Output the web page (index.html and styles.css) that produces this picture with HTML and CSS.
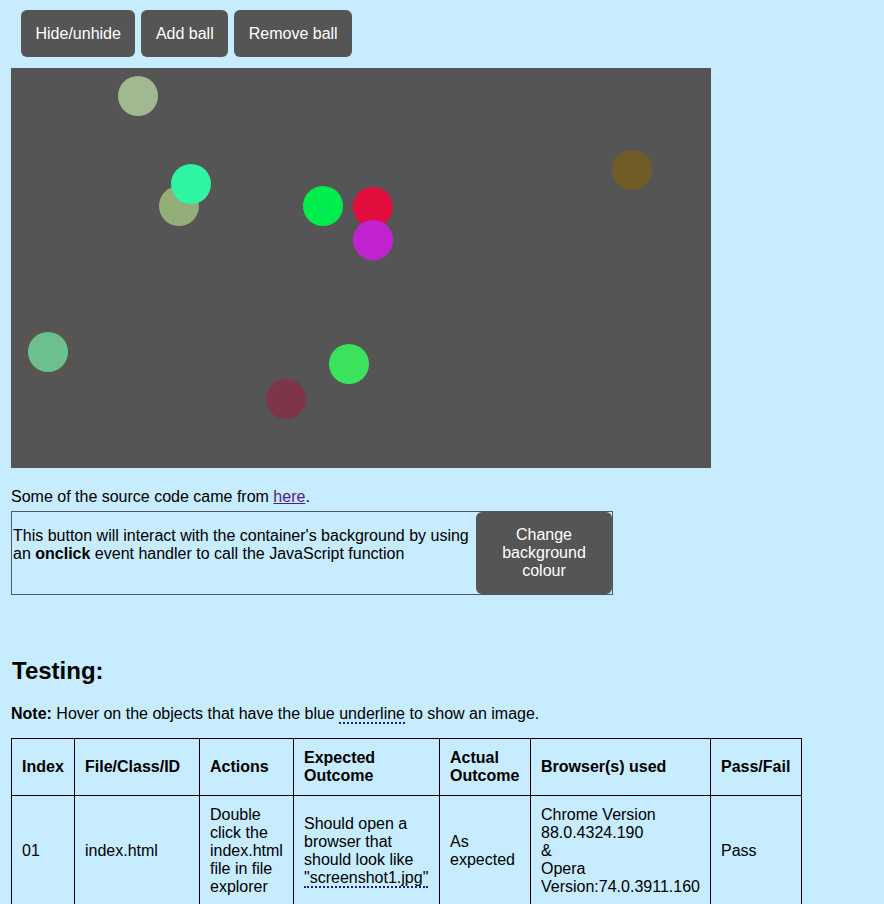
FILE: index.html
```html
<!DOCTYPE html>
<html lang="en">
<head>
<meta charset="utf-8">
<title>Bouncing balls</title>
<link rel="stylesheet" href="styles.css">
</head>
<body>
<div class="page">
  <div class="controls">
    <button class="btn">Hide/unhide</button>
    <button class="btn">Add ball</button>
    <button class="btn">Remove ball</button>
  </div>
  <svg class="stage" width="700" height="400" viewBox="0 0 700 400">
    <circle cx="127" cy="28" r="20" fill="#a0b990"/>
    <circle cx="168" cy="138" r="20" fill="#94ae79"/>
    <circle cx="180" cy="116" r="20" fill="#2ef5a2"/>
    <circle cx="312" cy="138" r="20" fill="#00ee4d"/>
    <circle cx="362" cy="139" r="20" fill="#e20c3d"/>
    <circle cx="362" cy="172" r="20" fill="#c322d1"/>
    <circle cx="621" cy="102" r="20" fill="#715d28"/>
    <circle cx="37" cy="284" r="20" fill="#6cbf8e"/>
    <circle cx="338" cy="296" r="20" fill="#3be25c"/>
    <circle cx="275" cy="331" r="20" fill="#7e3548"/>
  </svg>
  <p class="source">Some of the source code came from <a class="src-link" href="#">here</a>.</p>
  <div class="bg-box">
    <p class="bg-text"><span class="line">This button will interact with the container's background by using</span> <span class="line">an <b>onclick</b> event handler to call the JavaScript function</span></p>
    <button class="btn bg-btn">Change background colour</button>
  </div>
  <h2 class="testing">Testing:</h2>
  <p class="note"><b>Note:</b> Hover on the objects that have the blue <span class="hover">underline</span> to show an image.</p>
  <table class="tests">
    <colgroup>
      <col class="c1"><col class="c2"><col class="c3"><col class="c4"><col class="c5"><col class="c6"><col class="c7">
    </colgroup>
    <thead>
      <tr>
        <th>Index</th>
        <th>File/Class/ID</th>
        <th>Actions</th>
        <th>Expected Outcome</th>
        <th>Actual Outcome</th>
        <th>Browser(s) used</th>
        <th>Pass/Fail</th>
      </tr>
    </thead>
    <tbody>
      <tr>
        <td>01</td>
        <td>index.html</td>
        <td>Double click the index.html file in file explorer</td>
        <td>Should open a browser that should look like <span class="hover">"screenshot1.jpg"</span></td>
        <td>As expected</td>
        <td>Chrome Version<br>88.0.4324.190<br>&amp;<br>Opera<br>Version:74.0.3911.160</td>
        <td>Pass</td>
      </tr>
    </tbody>
  </table>
</div>
</body>
</html>
```

FILE: styles.css
```css
html, body {
  margin: 0;
  padding: 0;
}

body {
  background: #c6ecfd;
  font-family: "Liberation Sans", Arial, sans-serif;
  font-size: 16px;
  color: #000;
}

.page {
  padding: 0 0 0 11px;
}

.controls {
  display: flex;
  gap: 6px;
  padding: 10px 0 0 10px;
  margin-bottom: 11px;
}

.btn {
  background: #555;
  color: #fff;
  border: none;
  border-radius: 6px;
  padding: 14px 14.5px;
  font-family: "Liberation Sans", Arial, sans-serif;
  font-size: 16px;
  line-height: 19px;
}

.stage {
  display: block;
  background: #555;
}

.source {
  margin: 20px 0 5px;
  line-height: 18px;
}

.src-link {
  color: #551a8b;
}

.bg-box {
  width: 600px;
  border: 1px solid #4d5965;
  display: flex;
  justify-content: space-between;
  align-items: stretch;
}

.bg-text {
  margin: 15px 0 0 1px;
  width: 462px;
  line-height: 18px;
}

.bg-text .line {
  display: block;
  height: 18px;
  white-space: nowrap;
}

.bg-btn {
  width: 136px;
  padding: 14px 10px;
  line-height: 18px;
  text-align: center;
}

.testing {
  font-size: 24px;
  line-height: 28px;
  margin: 62px 0 0 1px;
}

.note {
  margin: 20px 0 15px;
  line-height: 18px;
}

.hover {
  border-bottom: 2px dotted #1a1aa6;
}

.tests {
  border-collapse: collapse;
  table-layout: fixed;
  width: 791px;
}

.tests th,
.tests td {
  border: 1px solid #000;
  padding: 10px;
  text-align: left;
  vertical-align: middle;
  line-height: 18px;
}

.c1 { width: 63px; }
.c2 { width: 125px; }
.c3 { width: 94px; }
.c4 { width: 146px; }
.c5 { width: 91px; }
.c6 { width: 180px; }
.c7 { width: 91px; }
```
